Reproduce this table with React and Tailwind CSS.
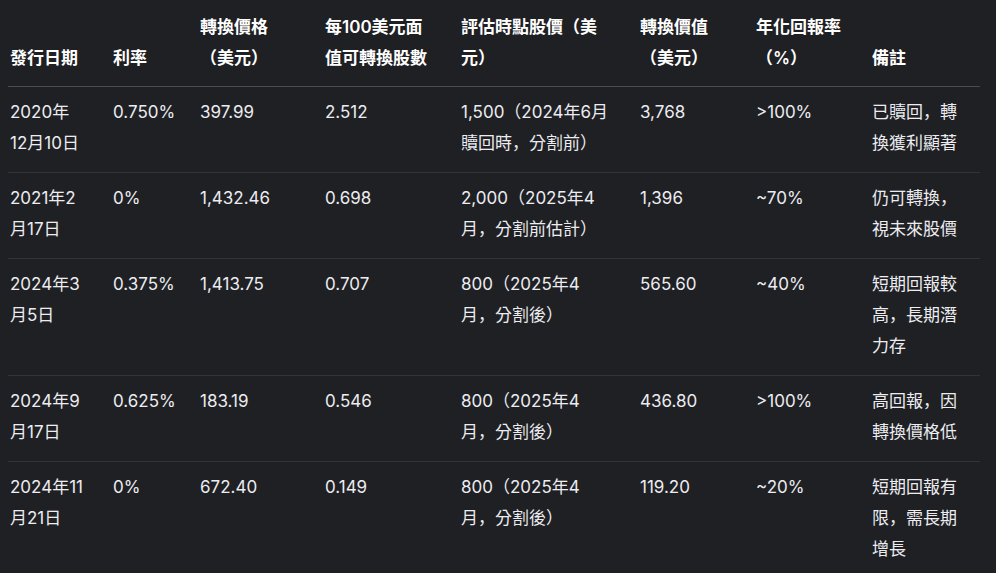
import React from 'react'

const headers = [
  ['', '發行日期'],
  ['', '利率'],
  ['轉換價格', '（美元）'],
  ['每100美元面', '值可轉換股數'],
  ['評估時點股價（美', '元）'],
  ['轉換價值', '（美元）'],
  ['年化回報率', '（%）'],
  ['', '備註'],
]

const widths = ['w-[103px]', 'w-[87px]', 'w-[125px]', 'w-[136px]', 'w-[179px]', 'w-[116px]', 'w-[116px]', 'w-[110px]']

const rows = [
  [['2020年', '12月10日'], ['0.750%'], ['397.99'], ['2.512'], ['1,500（2024年6月', '贖回時，分割前）'], ['3,768'], ['>100%'], ['已贖回，轉', '換獲利顯著']],
  [['2021年2', '月17日'], ['0%'], ['1,432.46'], ['0.698'], ['2,000（2025年4', '月，分割前估計）'], ['1,396'], ['~70%'], ['仍可轉換，', '視未來股價']],
  [['2024年3', '月5日'], ['0.375%'], ['1,413.75'], ['0.707'], ['800（2025年4', '月，分割後）'], ['565.60'], ['~40%'], ['短期回報較', '高，長期潛', '力存']],
  [['2024年9', '月17日'], ['0.625%'], ['183.19'], ['0.546'], ['800（2025年4', '月，分割後）'], ['436.80'], ['>100%'], ['高回報，因', '轉換價格低']],
  [['2024年11', '月21日'], ['0%'], ['672.40'], ['0.149'], ['800（2025年4', '月，分割後）'], ['119.20'], ['~20%'], ['短期回報有', '限，需長期', '增長']],
]

// full-width punctuation set in a CJK face so the comma sits low-left
function Text({ s }) {
  return s.split(/([，（）])/).map((p, i) =>
    /^[，（）]$/.test(p) ? (
      <span key={i} className="font-['Noto_Sans_CJK_SC'] leading-none">{p}</span>
    ) : (
      p
    )
  )
}

function Lines({ lines }) {
  return lines.map((l, i) => (
    <div key={i} className="whitespace-nowrap">
      {l ? <Text s={l} /> : '\u00a0'}
    </div>
  ))
}

export default function App() {
  return (
    <div
      className="min-h-screen bg-[#1f2023] text-[#ececf1] pl-2 pr-4"
      style={{ fontFamily: 'Inter, "Noto Sans CJK TC", sans-serif' }}
    >
      <table className="table-fixed border-collapse w-[972px] text-[17px] leading-[31px]">
        <thead>
          <tr className="border-b border-[#4a4b50]">
            {headers.map((h, i) => (
              <th
                key={i}
                className={`${widths[i]} text-left align-bottom font-semibold text-white pl-[2px] pr-3 pt-[12px] pb-[12px]`}
              >
                <Lines lines={h} />
              </th>
            ))}
          </tr>
        </thead>
        <tbody>
          {rows.map((r, ri) => (
            <tr key={ri} className={ri < rows.length - 1 ? 'border-b border-[#333438]' : ''}>
              {r.map((c, ci) => (
                <td key={ci} className="align-top pl-[2px] pr-3 pt-[10px] pb-[13px]">
                  <Lines lines={c} />
                </td>
              ))}
            </tr>
          ))}
        </tbody>
      </table>
    </div>
  )
}
